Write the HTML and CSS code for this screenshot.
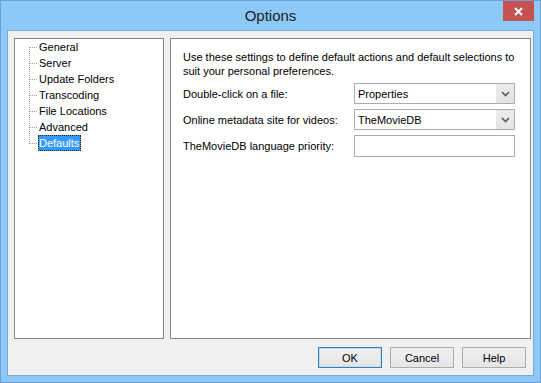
FILE: index.html
```html
<!DOCTYPE html>
<html lang="en">
<head>
<meta charset="UTF-8" />
<title>Options</title>
<link rel="stylesheet" href="styles.css">
</head>
<body>
<div class="window">
  <div class="titlebar">
    <span class="title">Options</span>
    <button class="close-btn" aria-label="Close">
      <svg width="9" height="9" viewBox="0 0 9 9"><path d="M1 1 L8 8 M8 1 L1 8" stroke="#fff" stroke-width="2"/></svg>
    </button>
  </div>
  <div class="client">
    <div class="panels">
      <!-- Category tree -->
      <div class="tree-panel">
        <ul class="tree">
          <li><span>General</span></li>
          <li><span>Server</span></li>
          <li><span>Update Folders</span></li>
          <li><span>Transcoding</span></li>
          <li><span>File Locations</span></li>
          <li><span>Advanced</span></li>
          <li class="selected"><span>Defaults</span></li>
        </ul>
      </div>
      <!-- Defaults page -->
      <div class="page-panel">
        <p class="intro">Use these settings to define default actions and default selections to suit your personal preferences.</p>
        <div class="form-grid">
          <label>Double-click on a file:</label>
          <div class="combo">
            <span class="combo-value">Properties</span>
            <span class="combo-arrow">
              <svg width="9" height="6" viewBox="0 0 9 6"><path d="M1 1 L4.5 4.5 L8 1" fill="none" stroke="#5a5a5a" stroke-width="1.6"/></svg>
            </span>
          </div>
          <label>Online metadata site for videos:</label>
          <div class="combo">
            <span class="combo-value">TheMovieDB</span>
            <span class="combo-arrow">
              <svg width="9" height="6" viewBox="0 0 9 6"><path d="M1 1 L4.5 4.5 L8 1" fill="none" stroke="#5a5a5a" stroke-width="1.6"/></svg>
            </span>
          </div>
          <label>TheMovieDB language priority:</label>
          <input class="textbox" type="text" />
        </div>
      </div>
    </div>
    <div class="actions">
      <button class="btn default">OK</button>
      <button class="btn">Cancel</button>
      <button class="btn">Help</button>
    </div>
  </div>
</div>
</body>
</html>
```

FILE: styles.css
```css
* { box-sizing: border-box; }
body {
  margin: 0;
  font-family: 'Liberation Sans', Arial, sans-serif;
  font-size: 11px;
  color: #000;
  background: #8cc8f8;
}
.window {
  width: 541px;
  height: 383px;
  background: #8cc8f8;
  border: 1px solid #6f9ed2;
  display: flex;
  flex-direction: column;
  padding: 0 6px 6px 6px;
  position: relative;
}
.titlebar {
  height: 29px;
  display: flex;
  align-items: center;
  justify-content: center;
}
.title {
  font-size: 15px;
  color: #1e1e1e;
}
.close-btn {
  position: absolute;
  top: 0;
  right: 6px;
  width: 31px;
  height: 20px;
  border: none;
  background: #c75050;
  display: flex;
  align-items: center;
  justify-content: center;
  padding: 0;
}
.client {
  flex: 1;
  background: #f0f0f0;
  border: 1px solid #7aa8d8;
  padding: 7px 6px 0 6px;
  display: flex;
  flex-direction: column;
}
.panels {
  display: flex;
  gap: 6px;
  height: 301px;
}
.tree-panel {
  flex: none;
  width: 150px;
  background: #fff;
  border: 1px solid #828790;
}
.tree {
  list-style: none;
  margin: 0 0 0 14px;
  padding: 0;
  position: relative;
  white-space: nowrap;
}
.tree::before {
  content: "";
  position: absolute;
  left: 0;
  top: 8px;
  height: 97px;
  border-left: 1px dotted #a0a0a0;
}
.tree li {
  height: 16px;
  display: flex;
  align-items: center;
  padding-left: 9px;
  position: relative;
}
.tree li::before {
  content: "";
  position: absolute;
  left: 1px;
  top: 8px;
  width: 7px;
  border-top: 1px dotted #a0a0a0;
}
.tree li span {
  padding: 0 2px 0 1px;
  line-height: 16px;
}
.tree li.selected span {
  background: #3399ff;
  color: #fff;
  outline: 1px dotted #3b2a00;
  outline-offset: -1px;
}
.page-panel {
  flex: 1;
  background: #fff;
  border: 1px solid #828790;
  padding: 11px 12px 0 12px;
}
.intro {
  margin: 0 0 5px 0;
  line-height: 14px;
  width: 335px;
}
.form-grid {
  display: grid;
  grid-template-columns: 171px 161px;
  grid-template-rows: 21px 21px 22px;
  row-gap: 5px;
  align-items: center;
}
.form-grid label {
  line-height: 14px;
}
.combo {
  height: 21px;
  border: 1px solid #acacac;
  background: #fff;
  display: flex;
  align-items: center;
}
.combo-value {
  flex: 1;
  padding-left: 3px;
}
.combo-arrow {
  width: 18px;
  height: 100%;
  background: linear-gradient(#ececec, #e3e3e3);
  display: flex;
  align-items: center;
  justify-content: center;
}
.textbox {
  height: 22px;
  width: 161px;
  border: 1px solid #abadb3;
  background: #fff;
  outline: none;
}
.actions {
  display: flex;
  justify-content: flex-end;
  gap: 8px;
  padding-top: 8px;
  padding-right: 1px;
}
.btn {
  width: 64px;
  height: 21px;
  font-family: inherit;
  font-size: 11px;
  color: #000;
  border: 1px solid #acacac;
  background: linear-gradient(#f0f0f0, #e5e5e5);
  padding: 0;
}
.btn.default {
  border-color: #3c7fb1;
  box-shadow: inset 0 0 0 1px #bfdaf5;
}
```
